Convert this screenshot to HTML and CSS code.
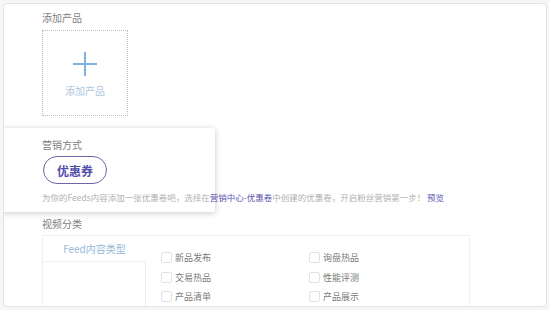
FILE: index.html
```html
<!DOCTYPE html>
<html lang="zh">
<head>
<meta charset="utf-8">
<link rel="stylesheet" href="styles.css">
</head>
<body>
<div class="card">
  <div class="label">添加产品</div>
  <div class="upload">
    <svg class="plus" width="24" height="24" viewBox="0 0 24 24"><path d="M12 0V24M0 12H24" stroke="#80b0de" stroke-width="2" fill="none"/></svg>
    <div class="upload-text">添加产品</div>
  </div>

  <div class="marketing">
    <div class="spot"></div>
    <div class="label rel">营销方式</div>
    <div class="pill rel">优惠券</div>
    <div class="desc rel">为你的Feeds内容添加一张优惠卷吧，选择在<span class="link">营销中心-优惠卷</span>中创建的优惠卷，开启粉丝营销第一步！ <span class="link">预览</span></div>
  </div>

  <div class="label cat-label">视频分类</div>
  <div class="cat">
    <div class="side">
      <div class="tab">Feed内容类型</div>
      <div class="side-rest"></div>
    </div>
    <div class="opts">
      <label class="opt"><span class="box"></span>新品发布</label>
      <label class="opt"><span class="box"></span>询盘热品</label>
      <label class="opt"><span class="box"></span>交易热品</label>
      <label class="opt"><span class="box"></span>性能评测</label>
      <label class="opt"><span class="box"></span>产品清单</label>
      <label class="opt"><span class="box"></span>产品展示</label>
    </div>
  </div>
</div>
</body>
</html>
```

FILE: styles.css
```css
* { box-sizing: border-box; }
html, body { margin: 0; padding: 0; }
body {
  background: #f6f6f6;
  font-family: "Noto Sans CJK SC", "Noto Sans", sans-serif;
  width: 549px;
  height: 310px;
  overflow: hidden;
}
.card {
  margin: 3px 0 0 3px;
  width: 544px;
  height: 304px;
  background: #fff;
  border: 1px solid #e3e3e3;
  border-radius: 4px;
  padding: 7px 0 0 38px;
  overflow: hidden;
}
.label {
  font-size: 10px;
  line-height: 14px;
  color: #808080;
}
.upload {
  margin-top: 5px;
  width: 86px;
  height: 86px;
  border: 1px dotted #bdbdbd;
  display: flex;
  flex-direction: column;
  align-items: center;
}
.plus { margin-top: 21px; display: block; }
.upload-text {
  margin-top: 8px;
  font-size: 10px;
  line-height: 14px;
  color: #adc6dd;
}
.marketing {
  position: relative;
  margin-top: 22px;
}
.spot {
  position: absolute;
  left: -40px;
  top: -10px;
  width: 213px;
  height: 84px;
  background: #fff;
  border-radius: 3px;
  box-shadow: 0 1px 6px rgba(0,0,0,0.22);
}
.rel { position: relative; }
.pill {
  margin-top: 4px;
  width: 64px;
  height: 28px;
  border: 1.5px solid #6b67a6;
  border-radius: 14px;
  display: flex;
  align-items: center;
  justify-content: center;
  font-size: 12px;
  font-weight: 700;
  color: #524dab;
  margin-left: 1px;
}
.desc {
  margin-top: 7px;
  font-size: 8.5px;
  line-height: 12px;
  color: #b0b0b0;
  white-space: nowrap;
}
.link { color: #5a56b2; }
.cat-label { margin-top: 14px; }
.cat {
  margin-top: 4px;
  width: 428px;
  height: 80px;
  border: 1px solid #f0f0f0;
  display: flex;
}
.side {
  width: 103px;
  display: flex;
  flex-direction: column;
}
.tab {
  height: 26px;
  border-bottom: 1px solid #f0f0f0;
  display: flex;
  align-items: center;
  justify-content: center;
  font-size: 10px;
  color: #98b8d8;
}
.side-rest {
  flex: 1;
  border-right: 1px solid #ececec;
}
.opts {
  flex: 1;
  padding: 12px 0 0 15px;
  display: grid;
  grid-template-columns: 148px 148px;
  grid-auto-rows: 19.5px;
  align-content: start;
}
.opt {
  display: flex;
  align-items: center;
  font-size: 9px;
  color: #7a7a7a;
}
.box {
  width: 11px;
  height: 11px;
  border: 1px solid #e2e2e2;
  border-radius: 2px;
  margin-right: 3px;
  background: #fff;
}
```
